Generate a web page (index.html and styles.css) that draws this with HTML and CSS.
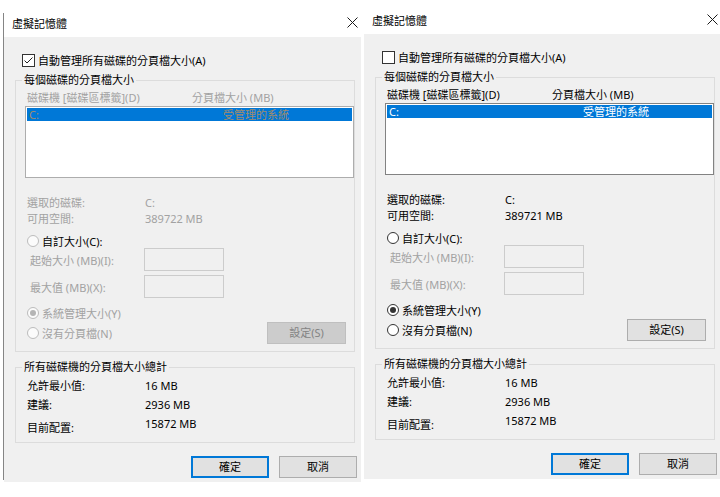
FILE: index.html
```html
<!DOCTYPE html>
<html lang="zh-Hant">
<head>
  <meta charset="UTF-8">
  <title>虛擬記憶體</title>
  <link rel="stylesheet" href="styles.css">
</head>
<body>
  <div class="screen">
    <div class="win-edge"></div>

    <!-- Auto managed -->
    <div class="dialog auto">
      <div class="titlebar">
        <span class="title">虛擬記憶體</span>
        <svg class="close" width="11" height="11" viewBox="0 0 11 11"><path d="M0.5 0.5L10.5 10.5M10.5 0.5L0.5 10.5" stroke="#1a1a1a" stroke-width="1"/></svg>
      </div>
      <div class="dlg-body">
        <div class="check-row">
          <span class="checkbox"><svg width="11" height="11" viewBox="0 0 11 11"><path d="M1.5 5.5L4 8L9.5 2.5" fill="none" stroke="#222" stroke-width="1"/></svg></span>
          <span>自動管理所有磁碟的分頁檔大小(A)</span>
        </div>

        <fieldset class="group">
          <legend>每個磁碟的分頁檔大小</legend>
          <div class="list-head muted">
            <span class="col-drive">磁碟機 [磁碟區標籤](D)</span>
            <span>分頁檔大小 (MB)</span>
          </div>
          <div class="listbox off">
            <div class="list-item selected off"><span class="col-item">C:</span><span>受管理的系統</span></div>
          </div>

          <div class="info muted">
            <div class="info-row"><span class="info-label">選取的磁碟:</span><span>C:</span></div>
            <div class="info-row"><span class="info-label">可用空間:</span><span>389722 MB</span></div>
          </div>

          <div class="radio-row first">
            <span class="radio off"></span><span>自訂大小(C):</span>
          </div>
          <div class="size-row">
            <span class="size-label muted">起始大小 (MB)(I):</span><span class="field"></span>
          </div>
          <div class="size-row spaced">
            <span class="size-label muted">最大值 (MB)(X):</span><span class="field"></span>
          </div>
          <div class="radio-row second muted">
            <span class="radio off checked"></span><span>系統管理大小(Y)</span>
          </div>
          <div class="radio-row last muted">
            <span class="radio off"></span><span>沒有分頁檔(N)</span>
            <button class="btn set" disabled>設定(S)</button>
          </div>
        </fieldset>

        <fieldset class="group totals">
          <legend>所有磁碟機的分頁檔大小總計</legend>
          <div class="total-row"><span class="info-label">允許最小值:</span><span>16 MB</span></div>
          <div class="total-row"><span class="info-label">建議:</span><span>2936 MB</span></div>
          <div class="total-row"><span class="info-label low">目前配置:</span><span>15872 MB</span></div>
        </fieldset>

        <div class="actions">
          <button class="btn default">確定</button>
          <button class="btn">取消</button>
        </div>
      </div>
    </div>

    <!-- Manual -->
    <div class="dialog manual">
      <div class="titlebar">
        <span class="title">虛擬記憶體</span>
        <svg class="close" width="11" height="11" viewBox="0 0 11 11"><path d="M0.5 0.5L10.5 10.5M10.5 0.5L0.5 10.5" stroke="#1a1a1a" stroke-width="1"/></svg>
      </div>
      <div class="dlg-body">
        <div class="check-row">
          <span class="checkbox"></span>
          <span>自動管理所有磁碟的分頁檔大小(A)</span>
        </div>

        <fieldset class="group">
          <legend>每個磁碟的分頁檔大小</legend>
          <div class="list-head">
            <span class="col-drive">磁碟機 [磁碟區標籤](D)</span>
            <span>分頁檔大小 (MB)</span>
          </div>
          <div class="listbox">
            <div class="list-item selected"><span class="col-item">C:</span><span>受管理的系統</span></div>
          </div>

          <div class="info">
            <div class="info-row"><span class="info-label">選取的磁碟:</span><span>C:</span></div>
            <div class="info-row"><span class="info-label">可用空間:</span><span>389721 MB</span></div>
          </div>

          <div class="radio-row first">
            <span class="radio"></span><span>自訂大小(C):</span>
          </div>
          <div class="size-row">
            <span class="size-label muted">起始大小 (MB)(I):</span><span class="field"></span>
          </div>
          <div class="size-row spaced">
            <span class="size-label muted">最大值 (MB)(X):</span><span class="field"></span>
          </div>
          <div class="radio-row second">
            <span class="radio checked"></span><span>系統管理大小(Y)</span>
          </div>
          <div class="radio-row last">
            <span class="radio"></span><span>沒有分頁檔(N)</span>
            <button class="btn set">設定(S)</button>
          </div>
        </fieldset>

        <fieldset class="group totals">
          <legend>所有磁碟機的分頁檔大小總計</legend>
          <div class="total-row"><span class="info-label">允許最小值:</span><span>16 MB</span></div>
          <div class="total-row"><span class="info-label">建議:</span><span>2936 MB</span></div>
          <div class="total-row"><span class="info-label low">目前配置:</span><span>15872 MB</span></div>
        </fieldset>

        <div class="actions">
          <button class="btn default">確定</button>
          <button class="btn">取消</button>
        </div>
      </div>
    </div>
  </div>
</body>
</html>
```

FILE: styles.css
```css
* {
  box-sizing: border-box;
}

html,
body {
  margin: 0;
}

body {
  background-color: #ffffff;
  color: #000000;
  font-family: "Noto Sans", "Noto Sans CJK TC", sans-serif;
  font-size: 11px;
  overflow: hidden;
}

.screen {
  display: flex;
  align-items: flex-start;
  width: 720px;
  height: 497px;
  padding-left: 3px;
  overflow: hidden;
}

.win-edge {
  flex: none;
  width: 1px;
  height: 467px;
  margin-top: 13px;
  background-color: #858585;
}

/* Dialog window */
.dialog {
  flex: none;
  width: 357px;
}

.dialog.auto {
  margin-top: 3px;
}

.dialog.manual {
  margin-left: 3px;
}

.titlebar {
  display: flex;
  align-items: center;
  justify-content: space-between;
  height: 34px;
  padding: 8px 3px 0 8px;
  background-color: #ffffff;
}

.title {
  line-height: 14px;
}

.close {
  margin-bottom: 3px;
}

.dlg-body {
  padding: 15px 0 4px;
  background-color: #f0f0f0;
}

.muted {
  color: #a2a2a2;
}

/* Checkbox */
.check-row {
  display: flex;
  align-items: center;
  gap: 3px;
  height: 16px;
  padding-left: 18px;
}

.checkbox {
  display: flex;
  align-items: center;
  justify-content: center;
  width: 13px;
  height: 13px;
  border: 1px solid #333333;
  background-color: #ffffff;
}

/* Group boxes */
.group {
  min-width: 0;
  margin: 5px 6px 0 11px;
  padding: 0 0 7px 9px;
  border: 1px solid #dcdcdc;
}

.group legend {
  height: 14px;
  margin-left: -3px;
  padding: 0 2px;
  line-height: 14px;
}

.list-head {
  display: flex;
  align-items: center;
  height: 19px;
  padding-left: 2px;
}

.col-drive {
  width: 165px;
}

.listbox {
  height: 72px;
  padding: 1px;
  border: 1px solid #828282;
  background-color: #ffffff;
}

.listbox.off {
  border-color: #adadad;
}

.list-item {
  display: flex;
  height: 13px;
  padding-left: 2px;
  line-height: 13px;
}

.list-item.selected {
  background-color: #0078d7;
  color: #ffffff;
}

.list-item.selected.off {
  color: #a08c6c;
}

.col-item {
  width: 194px;
}

.info {
  margin-top: 16px;
}

.info-row {
  display: flex;
  align-items: center;
  height: 16px;
  padding-left: 2px;
}

.info-label {
  width: 118px;
}

/* Radio buttons */
.radio-row {
  display: flex;
  align-items: center;
  gap: 3px;
  padding-left: 2px;
}

.radio-row.first {
  height: 14px;
  margin-top: 8px;
}

.radio-row.second {
  height: 14px;
  margin-top: 8px;
}

.radio-row.last {
  height: 22px;
  margin-top: 2px;
}

.radio {
  display: flex;
  align-items: center;
  justify-content: center;
  width: 12px;
  height: 12px;
  border: 1px solid #333333;
  border-radius: 50%;
  background-color: #ffffff;
}

.radio.checked::after {
  content: "";
  width: 6px;
  height: 6px;
  border-radius: 50%;
  background-color: #333333;
}

.radio.off {
  border-color: #bcbcbc;
  background-color: #fbfbfb;
}

.radio.off.checked::after {
  background-color: #b5b5b5;
}

.size-row {
  display: flex;
  align-items: center;
  height: 23px;
  padding-left: 5px;
}

.size-row.spaced {
  margin-top: 4px;
}

.size-label {
  width: 114px;
}

.field {
  width: 80px;
  height: 23px;
  border: 1px solid #cccccc;
  background-color: #f0f0f0;
}

/* Totals */
.totals {
  margin-top: 8px;
  padding-bottom: 9px;
}

.total-row {
  display: flex;
  align-items: flex-start;
  height: 19px;
  padding-left: 2px;
  line-height: 19px;
}

.total-row:first-of-type {
  margin-top: 2px;
}

.info-label.low {
  margin-top: 4px;
}

/* Buttons */
.btn {
  width: 78px;
  height: 22px;
  padding: 0;
  border: 1px solid #adadad;
  background-color: #e1e1e1;
  color: #000000;
  font: inherit;
  line-height: 20px;
}

.btn.default {
  border-color: #0078d7;
  box-shadow: inset 0 0 0 1px #0078d7;
}

.btn.set {
  width: 79px;
  margin-left: auto;
  margin-right: 8px;
}

.btn:disabled {
  border-color: #bfbfbf;
  background-color: #cccccc;
  color: #838383;
}

.actions {
  display: flex;
  justify-content: flex-end;
  gap: 10px;
  margin-top: 13px;
  padding-right: 4px;
}
```
